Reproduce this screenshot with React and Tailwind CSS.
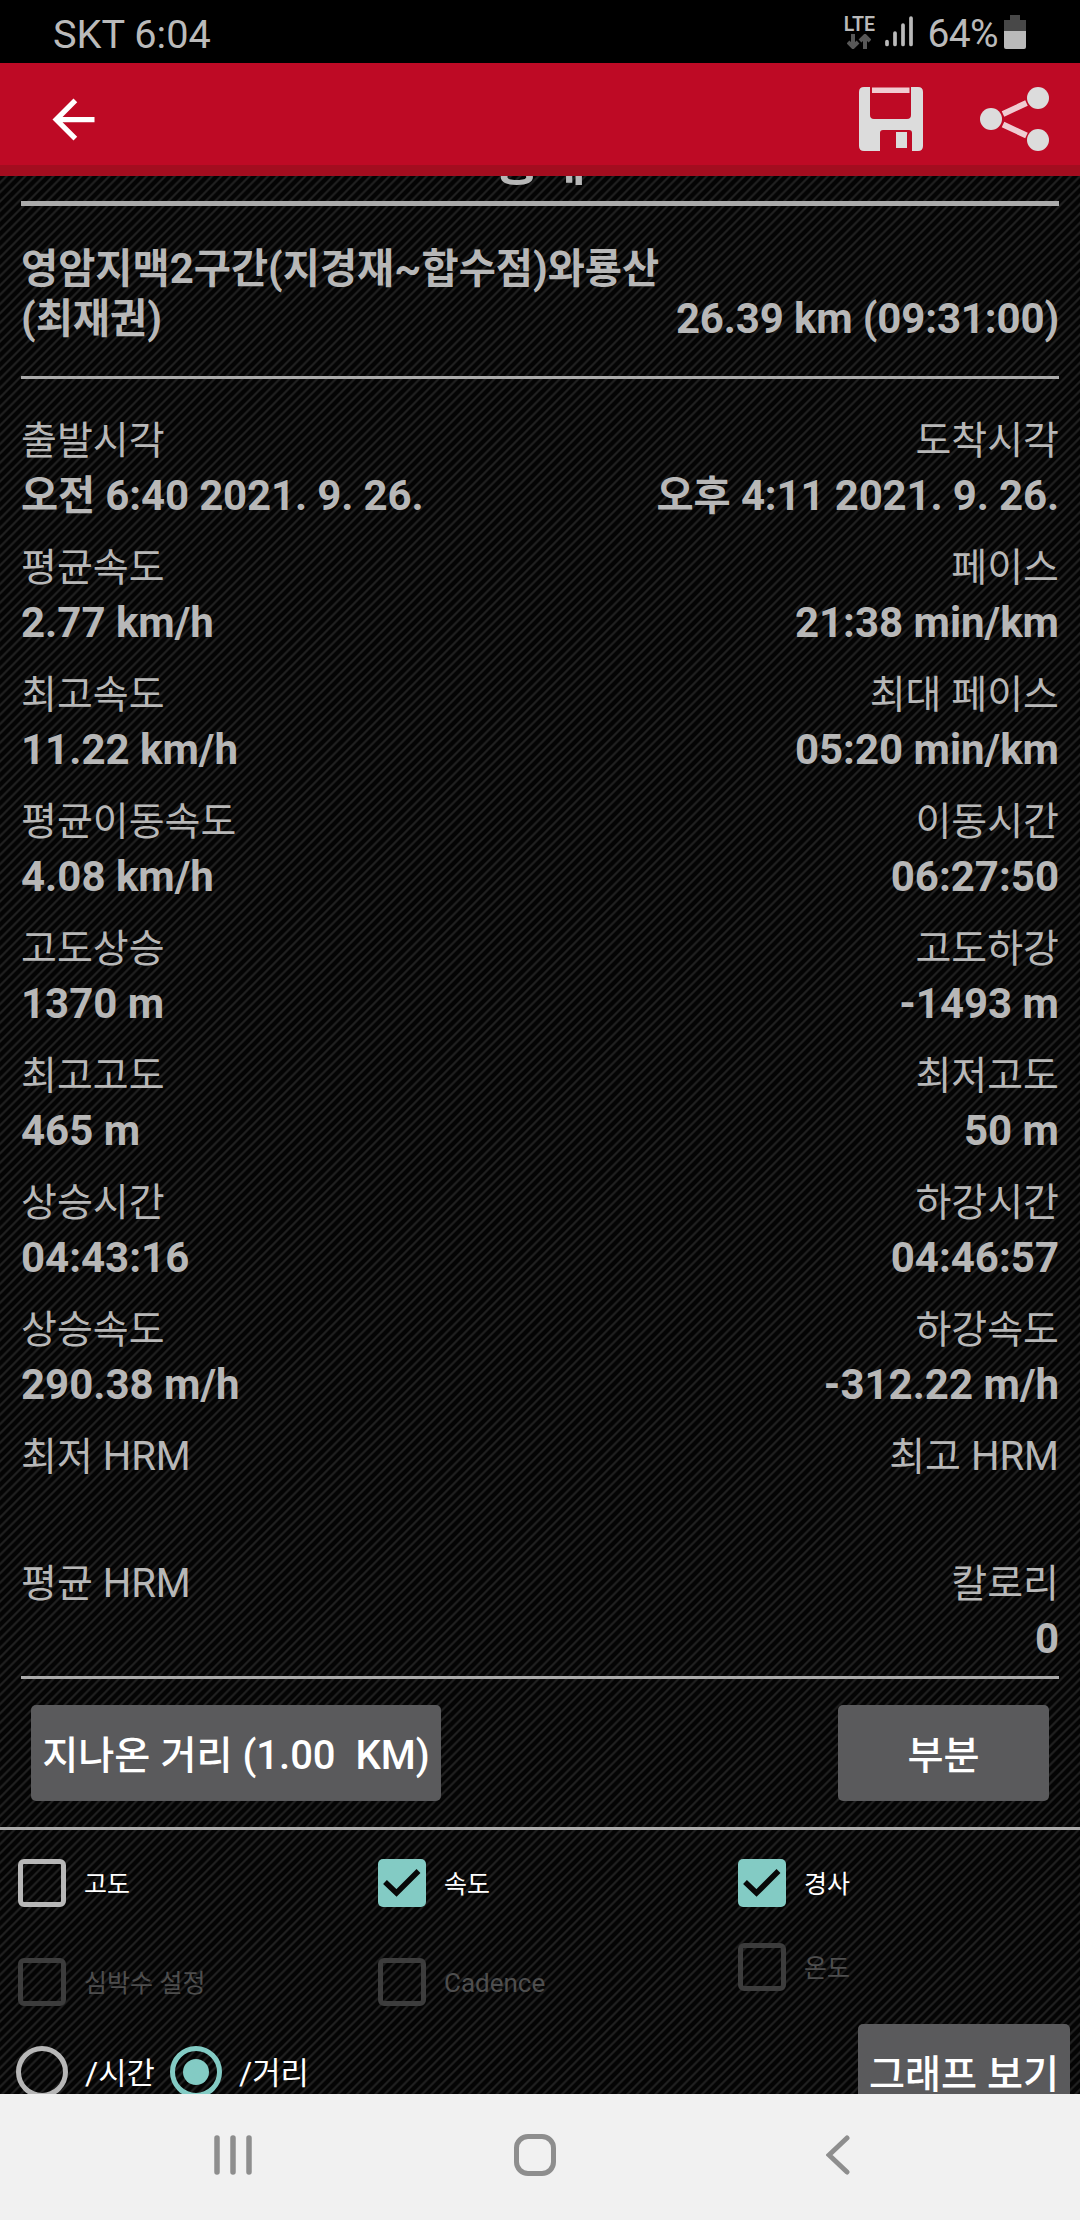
import React from "react";

const rows = [
    { l: "출발시각", lv: "오전 6:40 2021. 9. 26.", r: "도착시각", rv: "오후 4:11 2021. 9. 26." },
    { l: "평균속도", lv: "2.77 km/h", r: "페이스", rv: "21:38 min/km" },
    { l: "최고속도", lv: "11.22 km/h", r: "최대 페이스", rv: "05:20 min/km" },
    { l: "평균이동속도", lv: "4.08 km/h", r: "이동시간", rv: "06:27:50" },
    { l: "고도상승", lv: "1370 m", r: "고도하강", rv: "-1493 m" },
    { l: "최고고도", lv: "465 m", r: "최저고도", rv: "50 m" },
    { l: "상승시간", lv: "04:43:16", r: "하강시간", rv: "04:46:57" },
    { l: "상승속도", lv: "290.38 m/h", r: "하강속도", rv: "-312.22 m/h" },
    { l: "최저 HRM", lv: "", r: "최고 HRM", rv: "" },
    { l: "평균 HRM", lv: "", r: "칼로리", rv: "0" },
];

const Txt = ({ children, ko = "text-[0.962em]" }) => (
    <>
        {children.split(/([가-힣]+)/).map((part, i) =>
            i % 2 === 1 ? <span key={i} className={ko}>{part}</span> : part
        )}
    </>
);

const StatusBar = () => (
    <div className="h-[63px] shrink-0 bg-black flex items-center justify-between pl-[53px] pr-[54px] text-[#bababa] text-[39px]">
        <div className="leading-[63px] pt-[5px] text-[39.700px]">SKT 6:04</div>
        <div className="flex items-center">
            <div className="w-[30px] flex flex-col items-center mr-[11px]">
                <span className="text-[19.500px] leading-[19px] font-semibold">LTE</span>
                <svg width="24" height="15" viewBox="0 0 24 15" fill="none" stroke="#585858" strokeWidth="4">
                    <path d="M6 0V12M1 8L6 13L11 8M18 15V3M13 7L18 2L23 7" />
                </svg>
            </div>
            <svg width="28" height="31" viewBox="0 0 28 31" stroke="#bababa" strokeWidth="3.700" strokeLinecap="round">
                <path d="M2 25.500V28.500M10 17V28.500M18 9V28.500M26 2V28.500" />
            </svg>
            <div className="ml-[14px] leading-[63px] pt-[5px] tracking-[-0.6px]">64%</div>
            <svg className="ml-[6px]" width="22" height="34" viewBox="0 0 22 34">
                <path d="M6 0h10v5h6v11H0V5h6z" fill="#484848" />
                <path d="M0 16h22v16a2 2 0 0 1-2 2H2a2 2 0 0 1-2-2z" fill="#bababa" />
            </svg>
        </div>
    </div>
);

const Header = () => (
    <div className="h-[113px] shrink-0 bg-[#be0a25] border-b-[11px] border-[#a30d1f] flex items-center pl-[42px] pr-[31px] pt-[10px]">
        <svg width="63" height="63" viewBox="0 0 24 24" fill="#fff">
            <path d="M20 11H7.83l5.59-5.59L12 4l-8 8 8 8 1.41-1.41L7.83 13H20v-2z" />
        </svg>
        <svg className="ml-auto" width="64" height="64" viewBox="0 0 64 64" fill="#dcdcdc">
            <path d="M5 0H11V28Q11 32 15 32H48Q52 32 52 28V0H59Q64 0 64 5V59Q64 64 59 64H53V46Q53 43 50 43H24Q21 43 21 46V64H5Q0 64 0 59V5Q0 0 5 0Z" />
            <path d="M13 .5H50.500V6H13Z" fill="#f0ccd2" />
            <path d="M37 45H48V61H37Z" />
        </svg>
        <svg className="ml-[57px]" width="69" height="64" viewBox="0 0 69 64" fill="#dcdcdc">
            <path d="M23 27L46.500 16M23 37.500L46.500 48.500" stroke="#f0ccd2" strokeWidth="6" />
            <circle cx="11" cy="32" r="11" />
            <circle cx="58" cy="11" r="11" />
            <circle cx="58" cy="53" r="11" />
        </svg>
    </div>
);

const CheckItem = ({ label, checked, disabled, className = "" }) => (
    <div className={`flex items-center h-12 ${className}`}>
        {checked ? (
            <svg width="48" height="48" viewBox="0 0 48 48">
                <rect width="48" height="48" rx="5" fill="#83cbc4" />
                <path d="M7 23L18.500 34L40.500 12" fill="none" stroke="#080808" strokeWidth="5.500" />
            </svg>
        ) : (
            <div className={`w-12 h-12 rounded-[6px] border-[5.500px] ${disabled ? "border-[#3c3c3c]" : "border-[#b7b7b7]"}`}></div>
        )}
        <span className={`ml-[18px] pt-[2px] text-[26px] ${disabled ? "text-[#4e4e4e]" : "text-white"}`}><Txt>{label}</Txt></span>
    </div>
);

const Radio = ({ label, checked, className = "" }) => (
    <div className={`flex items-center h-[52px] ${className}`}>
        <div className={`w-[52px] h-[52px] rounded-full border-[5px] flex items-center justify-center ${checked ? "border-[#83cbc4]" : "border-[#b7b7b7]"}`}>
            {checked && <div className="w-[26px] h-[26px] rounded-full bg-[#83cbc4]"></div>}
        </div>
        <span className="ml-[17px] pt-[2px] text-[32px] text-white"><Txt>{label}</Txt></span>
    </div>
);

const Button = ({ children, className = "" }) => (
    <button className={`h-24 rounded-[5px] bg-[#5a5a5c] text-white text-[40px] font-medium whitespace-pre pt-[5px] ${className}`}>
        <Txt ko="text-[0.98em]">{children}</Txt>
    </button>
);

const NavBar = () => (
    <div className="h-[126px] shrink-0 bg-[#f1f1f1] flex items-center pl-[214px] pb-[4px]">
        <svg width="38" height="40" viewBox="0 0 38 40" stroke="#8e8e8e" strokeWidth="5.500" strokeLinecap="round">
            <path d="M3 3V37M19 3V37M35 3V37" />
        </svg>
        <div className="ml-[262px] w-[42px] h-[42px] rounded-[14px] border-[5px] border-[#8e8e8e]"></div>
        <svg className="ml-[270px]" width="24" height="40" viewBox="0 0 24 40" fill="none" stroke="#8e8e8e" strokeWidth="5" strokeLinecap="round">
            <path d="M21 3L3 20L21 37" />
        </svg>
    </div>
);

const App = () => {
    return (
        <main className="w-[1080px] h-[2220px] overflow-hidden flex flex-col bg-black font-['Roboto','Noto_Sans_CJK_KR',sans-serif]">
            <StatusBar />
            <Header />

            <div className="h-[1918px] overflow-hidden bg-[repeating-linear-gradient(135deg,#040404_0px,#040404_3px,#202020_4.400px,#202020_5.200px,#040404_6.600px)]">
                <div className="mx-[21px] text-[#b7b7b7] text-[42px]">
                    {/* section title, scrolled halfway under the header */}
                    <div className="h-[30px] border-b-[5px] border-[#aaaaaa] flex items-end justify-center overflow-hidden">
                        <span className="font-bold text-[52px] leading-[60px] mb-[8px]"><Txt>통계</Txt></span>
                    </div>

                    <div className="h-[173px] border-b-[3px] border-[#aaaaaa] pt-[38px] font-bold leading-[49px]">
                        <div className="whitespace-nowrap"><Txt>영암지맥2구간(지경재~합수점)와룡산</Txt></div>
                        <div className="flex justify-between">
                            <span><Txt>(최재권)</Txt></span>
                            <span className="tracking-[-0.15px]">26.39 km (09:31:00)</span>
                        </div>
                    </div>

                    <div className="pt-[34px] h-[1300px] border-b-[3px] border-[#aaaaaa]">
                        {rows.map((row, index) => (
                            <div key={index} className="h-[127px]">
                                <div className="flex justify-between text-[40px] leading-[56px]">
                                    <span><Txt ko="text-[0.975em]">{row.l}</Txt></span>
                                    <span><Txt ko="text-[0.975em]">{row.r}</Txt></span>
                                </div>
                                <div className={`flex justify-between font-bold leading-[54px] ${index === 0 ? "tracking-[-0.15px]" : ""}`}>
                                    <span><Txt>{row.lv}</Txt></span>
                                    <span><Txt>{row.rv}</Txt></span>
                                </div>
                            </div>
                        ))}
                    </div>
                </div>

                <div className="h-[151px] border-b-[3px] border-[#aaaaaa] pt-[26px] px-[31px] flex justify-between">
                    <Button className="w-[410px]">{"지나온 거리 (1.00  KM)"}</Button>
                    <Button className="w-[211px]">부분</Button>
                </div>

                <div className="grid grid-cols-[360px_360px_342px] pl-[18px] pt-[29px] h-[194px] content-start">
                    <CheckItem label="고도" />
                    <CheckItem label="속도" checked />
                    <CheckItem label="경사" checked />
                    <CheckItem label="심박수 설정" disabled className="mt-[51px]" />
                    <CheckItem label="Cadence" disabled className="mt-[51px]" />
                    <CheckItem label="온도" disabled className="mt-[36px]" />
                </div>

                <div className="flex pl-4 pr-[10px]">
                    <Radio label="/시간" className="mt-[22px] w-[154px]" />
                    <Radio label="/거리" className="mt-[22px]" checked />
                    <Button className="ml-auto w-[212px]">그래프 보기</Button>
                </div>
            </div>

            <NavBar />
        </main>
    );
};

export default App;
